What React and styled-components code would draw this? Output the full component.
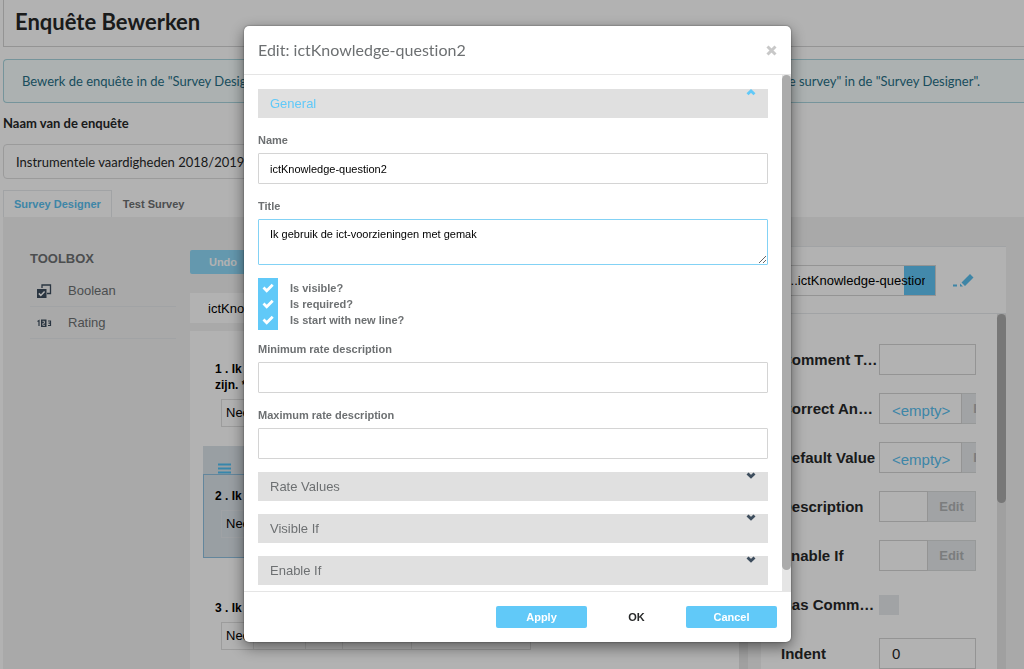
import React, { useState } from "react";
import styled, { createGlobalStyle } from "styled-components";

const sans = `"Liberation Sans", Arial, Helvetica, sans-serif`;
const lato = `Lato, "Helvetica Neue", Arial, sans-serif`;

const tools = [
  { id: "boolean", title: "Boolean" },
  { id: "rating", title: "Rating" },
];

const properties = [
  { name: "Comment Text", type: "text", value: "" },
  { name: "Correct Answer", type: "empty" },
  { name: "Default Value", type: "empty" },
  { name: "Description", type: "edit" },
  { name: "Enable If", type: "edit" },
  { name: "Has Comment", type: "check" },
  { name: "Indent", type: "text", value: "0" },
];

const ToolIcon = ({ id }) =>
  id === "boolean" ? (
    <svg width="16" height="16" viewBox="0 0 16 16" aria-hidden="true">
      <path d="M6 5V2h8.500v8.500H11" fill="none" stroke="#3d4d5d" strokeWidth="1.300" />
      <rect x="1" y="6" width="9.500" height="9" fill="#3d4d5d" />
      <path d="M2.800 10.400l2 2 3.800-3.900" fill="none" stroke="#fff" strokeWidth="1.500" />
    </svg>
  ) : (
    <svg width="16" height="16" viewBox="0 0 16 16" aria-hidden="true">
      <path d="M1.500 6.500l1.500-1v5.500" fill="none" stroke="#3d4d5d" strokeWidth="1.200" />
      <rect x="5" y="4.500" width="5.500" height="7.500" fill="#3d4d5d" />
      <path d="M6.500 6.300h2v2h-1.700v2h2.200" fill="none" stroke="#e4e4e4" />
      <path d="M12 6h2.500v4.500h-2.500M12.500 8.200h2" fill="none" stroke="#3d4d5d" strokeWidth="1.200" />
    </svg>
  );

const Chevron = ({ up }) => (
  <svg width="10" height="7" viewBox="0 0 10 7" aria-hidden="true">
    <path
      d={up ? "M1.500 5.200L5 2l3.500 3.200" : "M1.500 1.500L5 4.700l3.500-3.200"}
      fill="none"
      stroke="currentColor"
      strokeWidth="2.900"
    />
  </svg>
);

const PropertyEditor = ({ item }) => {
  const id = "prop-" + item.name.replace(/ /g, "-").toLowerCase();

  return (
    <PropertyRow>
      <label htmlFor={id}>{item.name}</label>
      {item.type === "text" && (
        <PropertyInput id={id} type="text" defaultValue={item.value} />
      )}
      {item.type === "empty" && (
        <Combo>
          <EmptyLink href="#value" id={id}>
            &lt;empty&gt;
          </EmptyLink>
          <SideButton type="button">Edit</SideButton>
        </Combo>
      )}
      {item.type === "edit" && (
        <Combo>
          <input id={id} type="text" />
          <SideButton type="button">Edit</SideButton>
        </Combo>
      )}
      {item.type === "check" && <PropertyCheck id={id} type="checkbox" />}
    </PropertyRow>
  );
};

const QuestionBlock = ({ no, title, more, selected }) => (
  <Question $selected={selected}>
    {selected && (
      <DragBar>
        <svg width="13" height="11" viewBox="0 0 13 11" aria-hidden="true">
          <path d="M0 1.500h13M0 5.500h13M0 9.500h13" stroke="#4fc1f5" strokeWidth="1.800" />
        </svg>
      </DragBar>
    )}
    <div className="content">
      <div className="title">
        {no} . {title}
        {more && <div>{more}</div>}
      </div>
      <RatingBar $selected={selected}>
        <span>Nee</span>
        <span />
        <span />
        <span />
        <span />
      </RatingBar>
    </div>
  </Question>
);

const App = () => {
  const [name, setName] = useState("ictKnowledge-question2");
  const [title, setTitle] = useState("Ik gebruik de ict-voorzieningen met gemak");

  return (
    <>
      <GlobalStyle />
      <Page>
        <PageHeader>
          <h1>Enquête Bewerken</h1>
        </PageHeader>
        <Message>
          <span>Bewerk de enquête in de "Survey Designer".</span>
          <span>"Save survey" in de "Survey Designer".</span>
        </Message>
        <NameField>
          <label htmlFor="survey-name">Naam van de enquête</label>
          <input
            id="survey-name"
            type="text"
            defaultValue="Instrumentele vaardigheden 2018/2019"
          />
        </NameField>
        <Tabs>
          <Tab href="#designer" $active>
            Survey Designer
          </Tab>
          <Tab href="#test">Test Survey</Tab>
        </Tabs>
        <Designer>
          <Toolbox>
            <h2>TOOLBOX</h2>
            {tools.map((tool) => (
              <ToolItem type="button" key={tool.id}>
                <ToolIcon id={tool.id} />
                {tool.title}
              </ToolItem>
            ))}
          </Toolbox>
          <Center>
            <Undo type="button">Undo</Undo>
            <PageName>ictKnowledge</PageName>
            <Canvas>
              <div className="questions">
                <QuestionBlock no="1" title="Ik" more="zijn. *" />
                <QuestionBlock no="2" title="Ik" selected />
                <QuestionBlock no="3" title="Ik" />
              </div>
              <ScrollTrack />
            </Canvas>
          </Center>
          <PropertyPanel>
            <div className="panel-header">
              <ObjectSelect>
                <select aria-label="Object">
                  <option>...ictKnowledge-question2</option>
                </select>
              </ObjectSelect>
              <EditIcon type="button" aria-label="Edit object">
                <svg width="21" height="16" viewBox="0 0 21 16" aria-hidden="true">
                  <path
                    d="M8.500 10.500L17 2l3.500 3.500-8.500 8.500zM7 11.500l3 3H7zM0 12.500h4v2H0z"
                    fill="#59bfee"
                  />
                </svg>
              </EditIcon>
            </div>
            <div className="panel-body">
              <PropertyList>
                {properties.map((item) => (
                  <PropertyEditor item={item} key={item.name} />
                ))}
              </PropertyList>
              <ScrollTrack $thumb={189} />
            </div>
          </PropertyPanel>
        </Designer>
      </Page>
      <Backdrop>
        <Modal role="dialog" aria-labelledby="modal-title">
          <ModalHeader>
            <h4 id="modal-title">Edit: ictKnowledge-question2</h4>
            <button type="button" aria-label="Close">
              <svg width="11" height="11" viewBox="0 0 11 11" aria-hidden="true">
                <path d="M1.500 1.500l8 8M9.500 1.500l-8 8" stroke="#c8c8c8" strokeWidth="3" />
              </svg>
            </button>
          </ModalHeader>
          <ModalBody>
            <div className="fields">
              <Section type="button" $open>
                General
                <Chevron up />
              </Section>
              <Field>
                <label htmlFor="q-name">Name</label>
                <input
                  id="q-name"
                  type="text"
                  value={name}
                  onChange={(e) => setName(e.target.value)}
                />
              </Field>
              <Field>
                <label htmlFor="q-title">Title</label>
                <textarea
                  id="q-title"
                  value={title}
                  onChange={(e) => setTitle(e.target.value)}
                />
              </Field>
              <Checks>
                {["Is visible?", "Is required?", "Is start with new line?"].map(
                  (text) => (
                    <CheckRow key={text}>
                      <span className="box">
                        <input type="checkbox" defaultChecked />
                        <svg width="12" height="10" viewBox="0 0 12 10" aria-hidden="true">
                          <path
                            d="M1.500 4.500l3.200 3.200 6-6"
                            fill="none"
                            stroke="#fff"
                            strokeWidth="2.800"
                          />
                        </svg>
                      </span>
                      {text}
                    </CheckRow>
                  )
                )}
              </Checks>
              <Field>
                <label htmlFor="q-min">Minimum rate description</label>
                <input id="q-min" type="text" />
              </Field>
              <Field>
                <label htmlFor="q-max">Maximum rate description</label>
                <input id="q-max" type="text" />
              </Field>
              {["Rate Values", "Visible If", "Enable If"].map((text) => (
                <Section type="button" key={text}>
                  {text}
                  <Chevron />
                </Section>
              ))}
            </div>
            <ModalTrack />
          </ModalBody>
          <ModalFooter>
            <FooterButton type="button" $primary>
              Apply
            </FooterButton>
            <FooterButton type="button">OK</FooterButton>
            <FooterButton type="button" $primary>
              Cancel
            </FooterButton>
          </ModalFooter>
        </Modal>
      </Backdrop>
    </>
  );
};

const GlobalStyle = createGlobalStyle`
  * {
    box-sizing: border-box;
  }

  body {
    margin: 0;
    background: #ffffff;
    font-family: ${sans};
    overflow: hidden;
  }

  button, input, select, textarea {
    font-family: inherit;
    margin: 0;
    border-radius: 0;
    outline: none;
  }

  a {
    text-decoration: none;
  }
`;

const Page = styled.div`
  display: flex;
  flex-direction: column;
  height: 100vh;
  overflow: hidden;
  padding-left: 3px;
`;

const PageHeader = styled.header`
  flex: none;
  height: 47px;
  padding: 8px 11px;
  border: solid #d4d4d5;
  border-width: 0 0 1px 1px;

  h1 {
    margin: 0;
    font: 700 22px/28px ${lato};
    color: #262728;
  }
`;

const Message = styled.div`
  flex: none;
  display: flex;
  justify-content: space-between;
  height: 44px;
  margin: 12px 0 0;
  padding: 0 44px 0 18px;
  border: 1px solid #a9d5de;
  border-right: none;
  border-radius: 4px 0 0 4px;
  background: #f6fefe;
  color: #276f86;
  font: 13px/42px ${lato};
  white-space: nowrap;
`;

const NameField = styled.div`
  flex: none;
  margin-top: 11px;
  font-family: ${lato};
  color: #262728;

  label {
    display: block;
    font-size: 13px;
    font-weight: 700;
    line-height: 18px;
    margin-bottom: 12px;
  }

  input {
    width: 50%;
    height: 35px;
    padding: 0 12px;
    border: 1px solid #dededf;
    border-radius: 4px;
    font-size: 13px;
    color: #262728;
  }
`;

const Tabs = styled.nav`
  flex: none;
  display: flex;
  height: 27px;
  margin-top: 11px;
`;

const Tab = styled.a`
  padding: 0 10px;
  border: 1px solid ${(props) => (props.$active ? "#e7eaec" : "transparent")};
  border-bottom: none;
  font-size: 11px;
  font-weight: 700;
  line-height: 26px;
  color: ${(props) => (props.$active ? "#59c0f0" : "#6d7072")};
`;

const Designer = styled.div`
  flex: 1;
  min-height: 0;
  display: flex;
  background: #f3f3f3;
`;

const Toolbox = styled.aside`
  flex: none;
  width: 187px;
  padding: 33px 14px 0 27px;

  h2 {
    margin: 0 0 7px;
    font-size: 13px;
    line-height: 18px;
    color: #6d7072;
  }
`;

const ToolItem = styled.button`
  display: flex;
  align-items: center;
  gap: 16px;
  width: 100%;
  height: 32px;
  padding: 0 6px;
  border: none;
  border-bottom: 1px solid #e7eaec;
  background: none;
  font-size: 13px;
  color: #6d7072;
`;

const Center = styled.main`
  flex: 1;
  min-width: 0;
  display: flex;
  flex-direction: column;
  padding-top: 33px;
`;

const Undo = styled.button`
  width: 66px;
  height: 24px;
  border: none;
  border-radius: 2px;
  background: #90dafa;
  color: #ffffff;
  font-size: 11px;
  font-weight: 700;
`;

const PageName = styled.div`
  flex: none;
  height: 30px;
  margin: 19px 22px 8px 0;
  padding-left: 18px;
  background: #ffffff;
  font-size: 13px;
  line-height: 31px;
  color: #000000;
`;

const Canvas = styled.div`
  flex: 1;
  min-height: 0;
  display: flex;
  background: #ffffff;

  .questions {
    flex: 1;
    overflow: hidden;
    padding: 18px 12px 0 13px;
  }
`;

const ScrollTrack = styled.div`
  flex: none;
  width: 9px;
  background: #e5e5e5;

  &::before {
    content: "";
    display: block;
    height: ${(props) => props.$thumb || 0}px;
    border-radius: 5px;
    background: #ababab;
  }
`;

const Question = styled.section`
  margin-bottom: ${(props) => (props.$selected ? "30px" : "7px")};
  background: ${(props) => (props.$selected ? "#dce4ea" : "none")};

  .content {
    height: ${(props) => (props.$selected ? "84px" : "auto")};
    padding: ${(props) => (props.$selected ? "13px 11px" : "12px")};
    border: ${(props) => (props.$selected ? "1px solid #8fc0e0" : "none")};
  }

  .title {
    font-size: 12px;
    font-weight: 700;
    line-height: 16px;
    color: #000000;
  }
`;

const DragBar = styled.div`
  height: 28px;
  padding: 17px 15px 0;
  line-height: 0;
`;

const RatingBar = styled.div`
  display: grid;
  grid-template-columns: 31px 52px 37px 69px 119px;
  width: 310px;
  height: 28px;
  margin: 6px 0 0 6px;
  border: 1px solid ${(props) => (props.$selected ? "#e4e8ec" : "#e0e0e0")};
  font-size: 13px;
  line-height: 26px;
  color: #000000;

  span {
    padding-left: 4px;
  }

  span + span {
    border-left: 1px solid #e7e7e7;
  }
`;

const PropertyPanel = styled.aside`
  flex: none;
  display: flex;
  flex-direction: column;
  width: 245px;
  margin: 29px 18px 0 13px;
  border-top: 1px solid #e7eaec;
  background: #ffffff;

  .panel-header {
    flex: none;
    display: flex;
    align-items: center;
    gap: 17px;
    height: 67px;
    padding: 0 32px 0 20px;
    border-bottom: 1px solid #e7eaec;
  }

  .panel-body {
    flex: 1;
    min-height: 0;
    display: flex;
    overflow: hidden;
  }
`;

const ObjectSelect = styled.div`
  flex: 1;
  min-width: 0;
  height: 31px;
  border: 1px solid #d4d4d4;
  background: linear-gradient(to left, #61c5f5 31px, #ffffff 31px);

  select {
    appearance: none;
    width: 100%;
    height: 29px;
    padding: 0 10px 0 5px;
    border: none;
    background: none;
    font-size: 13px;
    color: #000000;
  }
`;

const EditIcon = styled.button`
  flex: none;
  padding: 0;
  border: none;
  background: none;
  line-height: 0;
`;

const PropertyList = styled.div`
  flex: 1;
  min-width: 0;
  display: flex;
  flex-direction: column;
  gap: 18px;
  padding: 30px 21px 0 20px;
`;

const PropertyRow = styled.div`
  flex: none;
  display: grid;
  grid-template-columns: 98px minmax(0, 1fr);
  align-items: center;
  height: 31px;

  label {
    overflow: hidden;
    text-overflow: ellipsis;
    white-space: nowrap;
    font-size: 15px;
    font-weight: 700;
    color: #262728;
  }
`;

const PropertyInput = styled.input`
  width: 100%;
  height: 31px;
  padding: 0 12px;
  border: 1px solid #d4d4d4;
  background: #ffffff;
  font-size: 15px;
  color: #262728;
`;

const Combo = styled.div`
  display: flex;
  height: 31px;
  overflow: hidden;

  input {
    flex: 1;
    min-width: 0;
    border: 1px solid #d4d4d4;
    background: #ffffff;
  }
`;

const EmptyLink = styled.a`
  flex: none;
  width: 83px;
  padding-left: 12px;
  border: 1px solid #d4d4d4;
  font-size: 15px;
  line-height: 34px;
  color: #59c0f0;
`;

const SideButton = styled.button`
  flex: none;
  width: 48px;
  padding: 0;
  border: 1px solid #d9dbdc;
  border-left: none;
  background: #e7eaec;
  font-size: 13px;
  font-weight: 700;
  color: #b0b3b5;
`;

const PropertyCheck = styled.input`
  appearance: none;
  width: 20px;
  height: 20px;
  background: #e7eaec;
`;

const Backdrop = styled.div`
  position: fixed;
  inset: 0;
  display: flex;
  justify-content: center;
  align-items: flex-start;
  padding: 26px 0 0 11px;
  background: rgba(0, 0, 0, 0.3);
`;

const Modal = styled.div`
  width: 547px;
  border-radius: 5px;
  background: #ffffff;
  box-shadow: 0 5px 15px rgba(0, 0, 0, 0.5), 0 0 2px rgba(0, 0, 0, 0.5);
`;

const ModalHeader = styled.div`
  display: flex;
  align-items: center;
  justify-content: space-between;
  height: 49px;
  padding: 0 14px;
  border-bottom: 1px solid #e5e5e5;

  h4 {
    margin: 0;
    font: 400 16px/24px ${lato};
    font-variant-ligatures: none;
    color: #6d7072;
  }

  button {
    padding: 0;
    border: none;
    background: none;
    line-height: 0;
  }
`;

const ModalBody = styled.div`
  display: flex;

  .fields {
    flex: 1;
    padding: 14px 14px 6px;
  }
`;

const ModalTrack = styled.div`
  width: 9px;
  background: #e5e5e5;

  &::before {
    content: "";
    display: block;
    height: 96%;
    border-radius: 5px;
    background: #ababab;
  }
`;

const Section = styled.button`
  display: flex;
  justify-content: space-between;
  width: 100%;
  height: 29px;
  margin-bottom: 13px;
  padding: 0 12px;
  border: none;
  background: #e0e0e0;
  font-size: 13px;
  line-height: 29px;
  color: ${(props) => (props.$open ? "#61c9f8" : "#6d7072")};

  svg {
    color: ${(props) => (props.$open ? "#61c9f8" : "#3d4d5d")};
  }

  &:last-child {
    margin-bottom: 0;
  }
`;

const Field = styled.div`
  margin-bottom: 13px;

  label {
    display: block;
    margin-bottom: 4px;
    font-size: 11px;
    font-weight: 700;
    line-height: 18px;
    color: #6d7072;
  }

  input,
  textarea {
    display: block;
    width: 100%;
    height: 31px;
    padding: 0 11px;
    border: 1px solid #d4d4d4;
    border-radius: 1px;
    font-size: 11px;
    color: #000000;
  }

  textarea {
    height: 46px;
    padding: 8px 11px;
    border-color: #83d2f5;
  }
`;

const Checks = styled.div`
  margin-bottom: 14px;
`;

const CheckRow = styled.label`
  display: flex;
  gap: 12px;
  height: 16px;
  font-size: 11px;
  font-weight: 700;
  line-height: 20px;
  color: #6d7072;

  .box {
    position: relative;
    width: 20px;
    height: 20px;
    background: #61c9f8;
  }

  input {
    appearance: none;
    display: block;
    width: 20px;
    height: 20px;
  }

  svg {
    position: absolute;
    top: 5px;
    left: 4px;
  }
`;

const ModalFooter = styled.div`
  display: flex;
  justify-content: flex-end;
  gap: 4px;
  padding: 14px;
  border-top: 1px solid #e5e5e5;
`;

const FooterButton = styled.button`
  width: 91px;
  height: 22px;
  padding: 0;
  border: none;
  border-radius: 2px;
  background: ${(props) => (props.$primary ? "#61c9f8" : "none")};
  font-size: 11px;
  font-weight: 700;
  color: ${(props) => (props.$primary ? "#ffffff" : "#262728")};
`;

export default App;
